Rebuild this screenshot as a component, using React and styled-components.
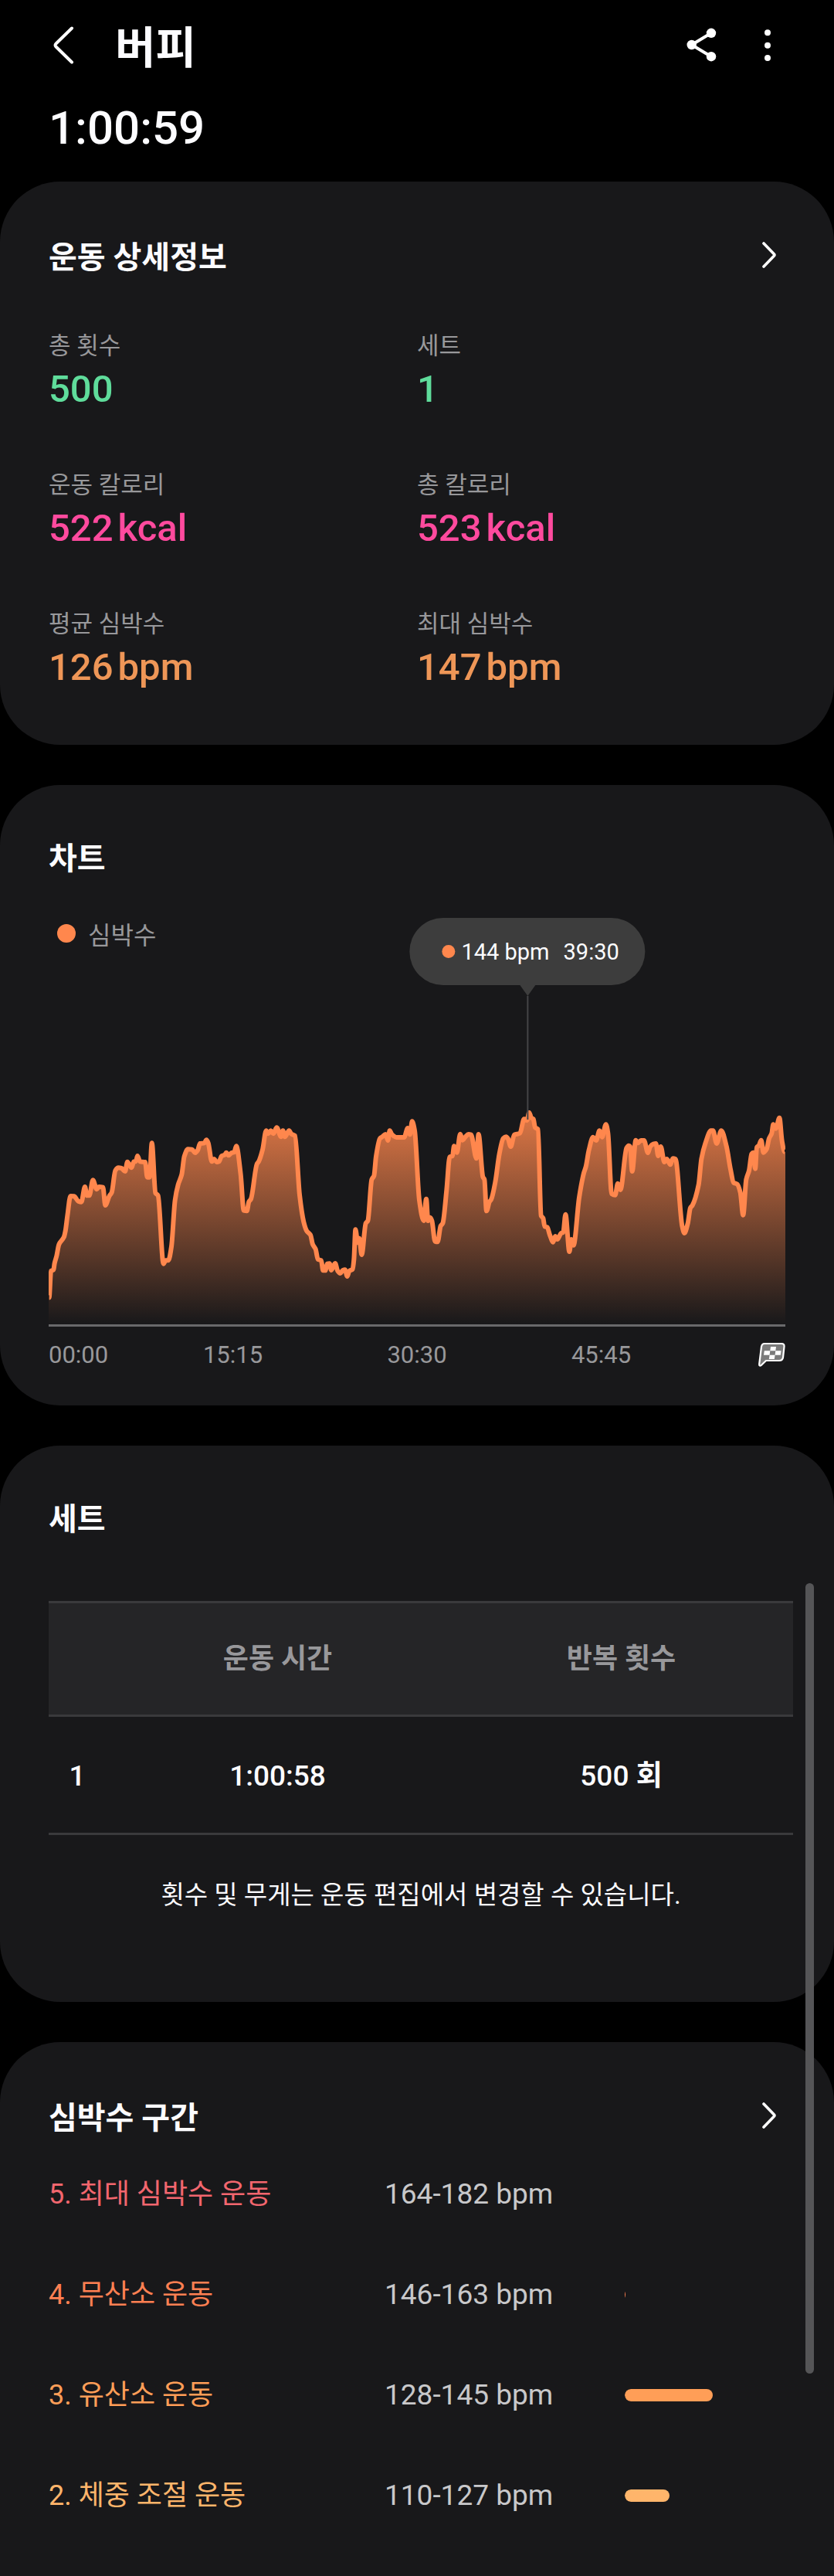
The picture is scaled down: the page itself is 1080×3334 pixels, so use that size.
import styled, { createGlobalStyle } from "styled-components";

const GlobalStyle = createGlobalStyle`
  * {
    box-sizing: border-box;
  }

  body {
    margin: 0;
    background-color: #000000;
    color: #fcfcff;
    font-family: Roboto, "Noto Sans CJK KR", sans-serif;
  }
`;

const Container = styled.div`
  position: relative;
  min-height: 100vh;
  display: flex;
  flex-direction: column;
`;

const Header = styled.header`
  padding: 26px 66px 32px 63px;
`;

const TopBar = styled.div`
  display: flex;
  align-items: center;
  height: 66px;
`;

const IconButton = styled.button`
  display: flex;
  align-items: center;
  justify-content: center;
  width: ${(props) => props.$width || 40}px;
  height: 66px;
  padding: 0;
  border: none;
  background: none;
  color: white;
  cursor: pointer;
`;

const Title = styled.h1`
  flex: 1;
  margin: 0 0 0 48px;
  padding-top: 8px;
  font-size: 57px;
  line-height: 66px;
  font-weight: 700;
`;

const Actions = styled.div`
  display: flex;
  gap: 46px;
`;

const Duration = styled.div`
  margin-top: 36px;
  font-size: 60px;
  line-height: 75px;
  font-weight: 500;
`;

const Sections = styled.main`
  flex: 1;
  display: flex;
  flex-direction: column;
  gap: 52px;
`;

const Card = styled.section`
  padding: 66px 63px ${(props) => props.$bottom || 0}px;
  border-radius: 78px;
  background-color: #18181a;
`;

const LastCard = styled(Card)`
  flex: 1;
  border-radius: 78px 78px 0 0;
`;

const CardHead = styled.div`
  display: flex;
  align-items: flex-end;
  justify-content: space-between;
  height: ${(props) => (props.$linked ? 63 : 60)}px;
`;

const CardTitle = styled.h2`
  margin: 0;
  font-size: 40px;
  line-height: 60px;
  font-weight: 700;
`;

const Stats = styled.dl`
  display: grid;
  grid-template-columns: 1fr 1fr;
  row-gap: 66px;
  margin: 60px 0 0;
`;

const Stat = styled.div`
  height: 114px;
`;

const StatLabel = styled.dt`
  color: #98989b;
  font-size: 31px;
  line-height: 48px;
`;

const StatValue = styled.dd`
  display: flex;
  gap: 6px;
  margin: 0;
  color: ${(props) => props.$color};
  font-size: 49px;
  line-height: 64px;
  font-weight: 500;
`;

const Chart = styled.div`
  position: relative;
  margin-top: 46px;
`;

const Legend = styled.div`
  display: flex;
  align-items: center;
  gap: 16px;
  height: 40px;
  padding-left: 11px;
  color: #98989b;
  font-size: 32px;
`;

const Dot = styled.span`
  width: ${(props) => props.$size}px;
  height: ${(props) => props.$size}px;
  border-radius: 50%;
  background-color: #ff874d;
`;

const Plot = styled.svg`
  display: block;
  width: 100%;
  height: 314px;
  margin-top: 172px;
`;

const Axis = styled.div`
  display: grid;
  grid-template-columns: 1fr 2fr 2fr 2fr 1fr;
  align-items: center;
  height: 75px;
  border-top: 3px solid #69696b;
  color: #98989b;
  font-size: 31px;
  text-align: center;

  & > :first-child {
    text-align: left;
  }

  & > :last-child {
    justify-self: end;
  }
`;

const Marker = styled.div`
  position: absolute;
  top: 0;
  left: ${(props) => props.$at}%;
  display: flex;
  flex-direction: column;
  align-items: center;
  transform: translateX(-50%);
`;

const Tooltip = styled.div`
  display: flex;
  align-items: center;
  gap: 8px;
  height: 87px;
  padding: 0 34px 0 42px;
  border-radius: 44px;
  background-color: #3d3d3d;
  font-size: 29px;
  white-space: nowrap;
`;

const TooltipTime = styled.span`
  margin-left: 10px;
`;

const Arrow = styled.div`
  border: 10px solid transparent;
  border-top: 14px solid #3d3d3d;
  border-bottom: none;
`;

const MarkerLine = styled.div`
  width: 2px;
  height: 160px;
  background-color: #444446;
`;

const Table = styled.table`
  width: 100%;
  margin-top: 75px;
  border-collapse: collapse;
  table-layout: fixed;
`;

const TableWrap = styled.div`
  margin-right: -10px;
`;

const HeadCell = styled.th`
  width: ${(props) => props.$width || "auto"};
  height: 147px;
  padding: 0;
  border: solid #3a3a3c;
  border-width: 3px 0;
  background-color: #252527;
  color: #98989b;
  font-size: 36px;
  line-height: 48px;
  font-weight: 700;
`;

const Cell = styled.td`
  height: 153px;
  padding: 4px 0 0;
  border-bottom: 3px solid #3a3a3c;
  font-size: 37px;
  line-height: 48px;
  font-weight: 500;
  text-align: center;
`;

const Unit = styled.span`
  font-weight: 700;
`;

const Note = styled.p`
  margin: 54px 0 0;
  font-size: 33px;
  line-height: 48px;
  text-align: center;
`;

const Zones = styled.ul`
  margin: 3px 0 0;
  padding: 0;
  list-style: none;
`;

const Zone = styled.li`
  display: grid;
  grid-template-columns: 435px 311px 1fr;
  align-items: center;
  height: 130px;
  font-size: 36px;
  line-height: 130px;
`;

const ZoneName = styled.span`
  color: ${(props) => props.$color};
`;

const ZoneRange = styled.span`
  color: #c8c8ca;
  font-size: 37px;
`;

const ZoneTrack = styled.span`
  height: 16px;
  border-radius: 8px;
  overflow: hidden;
`;

const ZoneBar = styled.span`
  display: block;
  height: 16px;
  border-radius: 8px;
  background-color: ${(props) => props.$color};
`;

const Scrollbar = styled.div`
  position: absolute;
  top: 2049px;
  right: 26px;
  width: 11px;
  height: 1023px;
  border-radius: 6px;
  background-color: #555557;
`;

const green = "#5fdc9b";
const pink = "#ff4a9e";
const orange = "#ee9657";

const stats = [
  { label: "총 횟수", value: "500", color: green },
  { label: "세트", value: "1", color: green },
  { label: "운동 칼로리", value: "522", unit: "kcal", color: pink },
  { label: "총 칼로리", value: "523", unit: "kcal", color: pink },
  { label: "평균 심박수", value: "126", unit: "bpm", color: orange },
  { label: "최대 심박수", value: "147", unit: "bpm", color: orange },
];

const zones = [
  { name: "5. 최대 심박수 운동", range: "164-182 bpm", color: "#f2666e", share: 0 },
  { name: "4. 무산소 운동", range: "146-163 bpm", color: "#ff8052", share: 0.5 },
  { name: "3. 유산소 운동", range: "128-145 bpm", color: "#ff9e57", share: 55 },
  { name: "2. 체중 조절 운동", range: "110-127 bpm", color: "#ffb56b", share: 28 },
];

// heart rate samples, [x, y] in plot units
const samples = [
  [2, 838], [9, 735], [19, 730], [23, 705], [31, 676], [40, 632], [59, 604], [65, 580],
  [73, 520], [85, 444], [99, 445], [115, 464], [127, 467], [141, 408], [149, 442], [158, 442],
  [172, 382], [187, 418], [195, 408], [211, 410], [220, 480], [236, 443], [245, 430], [259, 345],
  [271, 334], [283, 336], [297, 348], [306, 311], [322, 334], [331, 310], [339, 309], [345, 288],
  [355, 310], [375, 312], [383, 371], [392, 371], [401, 238], [415, 432], [425, 442], [446, 707],
  [455, 694], [465, 694], [477, 640], [491, 460], [503, 400], [517, 360], [527, 290], [541, 262],
  [557, 263], [569, 276], [579, 266], [588, 240], [605, 238], [613, 226], [620, 238], [634, 310],
  [643, 300], [653, 312], [662, 310], [672, 288], [684, 284], [690, 275], [699, 286], [711, 276],
  [721, 273], [729, 250], [746, 360], [758, 500], [770, 502], [778, 466], [786, 455], [809, 320],
  [816, 310], [831, 264], [845, 190], [853, 202], [863, 190], [873, 202], [886, 178], [903, 214],
  [910, 190], [918, 214], [934, 190], [943, 203], [957, 210], [975, 440], [991, 545], [1003, 580],
  [1017, 595], [1026, 632], [1037, 650], [1046, 690], [1059, 694], [1066, 733], [1075, 733], [1082, 707],
  [1091, 706], [1098, 732], [1113, 705], [1123, 735], [1133, 744], [1143, 732], [1151, 730], [1160, 756],
  [1168, 735], [1181, 728], [1186, 690], [1192, 574], [1201, 625], [1207, 608], [1216, 672], [1232, 550],
  [1240, 540], [1255, 380], [1264, 365], [1272, 290], [1287, 220], [1296, 214], [1309, 204], [1318, 228],
  [1325, 190], [1333, 204], [1351, 216], [1381, 216], [1395, 180], [1404, 205], [1412, 154], [1422, 190],
  [1440, 460], [1457, 540], [1467, 455], [1474, 540], [1482, 527], [1489, 540], [1501, 620], [1511, 622],
  [1523, 560], [1531, 550], [1546, 420], [1558, 292], [1569, 288], [1575, 250], [1586, 275], [1599, 203],
  [1608, 227], [1619, 214], [1631, 204], [1641, 206], [1662, 298], [1670, 204], [1687, 370], [1693, 380],
  [1701, 502], [1713, 465], [1719, 458], [1735, 390], [1751, 280], [1766, 220], [1777, 214], [1785, 222],
  [1795, 252], [1809, 206], [1831, 200], [1847, 145], [1858, 150], [1867, 120], [1875, 140], [1883, 145],
  [1890, 178], [1901, 185], [1913, 520], [1921, 530], [1927, 562], [1937, 565], [1947, 595], [1960, 623],
  [1968, 600], [1976, 612], [1991, 588], [1999, 585], [2008, 515], [2023, 660], [2031, 612], [2039, 635],
  [2061, 450], [2079, 355], [2087, 330], [2099, 265], [2115, 215], [2127, 228], [2140, 190], [2150, 215],
  [2165, 166], [2173, 200], [2187, 435], [2201, 440], [2211, 395], [2221, 420], [2245, 258], [2254, 248],
  [2259, 252], [2267, 348], [2281, 227], [2289, 238], [2301, 228], [2313, 228], [2328, 276], [2337, 252],
  [2349, 242], [2359, 240], [2368, 288], [2378, 252], [2392, 312], [2401, 300], [2415, 322], [2425, 298],
  [2435, 300], [2461, 560], [2470, 588], [2483, 550], [2493, 490], [2501, 480], [2525, 400], [2536, 300],
  [2551, 240], [2573, 190], [2581, 190], [2595, 240], [2613, 190], [2633, 250], [2649, 340], [2661, 392],
  [2675, 398], [2687, 430], [2698, 518], [2710, 380], [2721, 345], [2731, 280], [2737, 275], [2745, 338],
  [2751, 255], [2759, 248], [2768, 227], [2777, 275], [2789, 262], [2799, 220], [2809, 200], [2815, 166],
  [2825, 182], [2839, 140], [2849, 230], [2859, 272],
];

// smooth line that keeps every peak where it was sampled
const smoothPath = (points) => {
  const slope = (i) => {
    if (i === 0 || i === points.length - 1) return 0;
    const [x0, y0] = points[i - 1];
    const [x1, y1] = points[i];
    const [x2, y2] = points[i + 1];
    const a = (y1 - y0) / (x1 - x0);
    const b = (y2 - y1) / (x2 - x1);
    return a * b <= 0 ? 0 : (2 * a * b) / (a + b);
  };

  return points.slice(1).reduce((path, [x, y], i) => {
    const [px, py] = points[i];
    const third = (x - px) / 3;
    const c1 = `${px + third} ${py + slope(i) * third}`;
    const c2 = `${x - third} ${y - slope(i + 1) * third}`;
    return `${path} C${c1} ${c2} ${x} ${y}`;
  }, `M${points[0].join(" ")}`);
};

const linePath = smoothPath(samples);

const BackIcon = () => (
  <svg width="28" height="50" viewBox="0 0 28 50" fill="none" stroke="currentColor" strokeWidth="4" strokeLinecap="round" strokeLinejoin="round">
    <path d="M25 2.500L4.500 22.500Q2.500 24.500 4.500 26.500L25 46.500" />
  </svg>
);

const ShareIcon = () => (
  <svg width="40" height="46" viewBox="0 0 40 46" fill="currentColor">
    <path d="M33 6.800L7.700 22L33 37.200" fill="none" stroke="currentColor" strokeWidth="4" />
    <circle cx="33" cy="6.800" r="6.200" />
    <circle cx="7.700" cy="22" r="6.200" />
    <circle cx="33" cy="37.200" r="6.200" />
  </svg>
);

const MoreIcon = () => (
  <svg width="10" height="44" viewBox="0 0 10 44" fill="currentColor">
    <circle cx="5" cy="5.300" r="4" />
    <circle cx="5" cy="21.700" r="4" />
    <circle cx="5" cy="38" r="4" />
  </svg>
);

const ChevronIcon = () => (
  <svg width="20" height="36" viewBox="0 0 20 36" fill="none" stroke="currentColor" strokeWidth="3.600" strokeLinecap="round" strokeLinejoin="round">
    <path d="M3 2L16.500 16Q17.500 17 16.500 18L3 32" />
  </svg>
);

const FlagIcon = () => (
  <svg width="36" height="32" viewBox="0 0 36 32">
    <path
      d="M9 2H31Q35 2 34.500 6L33 20Q32.300 24 28 24H11L4.500 30.300Q2 31.500 2.200 28.500L5 6Q5.700 2 9 2Z"
      fill="#7b7b7b"
      stroke="white"
      strokeWidth="2.200"
      strokeLinejoin="round"
    />
    <path d="M17 6H24L23.300 11.300H16.300ZM8.800 11.300H16.300L15.600 16.700H8ZM23.300 11.300H30.500L29.800 16.700H22.600ZM15.600 16.700H22.600L21.800 22H14.800Z" fill="white" />
  </svg>
);

const HeartRateChart = () => (
  <Chart>
    <Legend>
      <Dot $size={24} />
      심박수
    </Legend>
    <Plot viewBox="0 0 2862 942" preserveAspectRatio="none">
      <defs>
        <linearGradient id="heart" gradientUnits="userSpaceOnUse" x1="0" y1="110" x2="0" y2="942">
          <stop offset="0" stopColor="#ff874d" stopOpacity="0.87" />
          <stop offset="1" stopColor="#ff874d" stopOpacity="0" />
        </linearGradient>
      </defs>
      <path d={`${linePath} L2862 272 V942 H0 V838 Z`} fill="url(#heart)" />
      <path d={linePath} fill="none" stroke="#ff874d" strokeWidth="6" strokeLinejoin="round" vectorEffect="non-scaling-stroke" />
    </Plot>
    <Axis>
      <span>00:00</span>
      <span>15:15</span>
      <span>30:30</span>
      <span>45:45</span>
      <FlagIcon />
    </Axis>
    <Marker $at={65}>
      <Tooltip>
        <Dot $size={17} />
        <span>144 bpm</span>
        <TooltipTime>39:30</TooltipTime>
      </Tooltip>
      <Arrow />
      <MarkerLine />
    </Marker>
  </Chart>
);

const App = () => {
  return (
    <Container>
      <GlobalStyle />
      <Header>
        <TopBar>
          <IconButton $width={38} aria-label="뒤로">
            <BackIcon />
          </IconButton>
          <Title>버피</Title>
          <Actions>
            <IconButton aria-label="공유">
              <ShareIcon />
            </IconButton>
            <IconButton aria-label="더보기">
              <MoreIcon />
            </IconButton>
          </Actions>
        </TopBar>
        <Duration>1:00:59</Duration>
      </Header>
      <Sections>
        <Card $bottom={66}>
          <CardHead $linked>
            <CardTitle>운동 상세정보</CardTitle>
            <IconButton $width={42} aria-label="운동 상세정보">
              <ChevronIcon />
            </IconButton>
          </CardHead>
          <Stats>
            {stats.map((stat) => (
              <Stat key={stat.label}>
                <StatLabel>{stat.label}</StatLabel>
                <StatValue $color={stat.color}>
                  <span>{stat.value}</span>
                  {stat.unit && <span>{stat.unit}</span>}
                </StatValue>
              </Stat>
            ))}
          </Stats>
        </Card>
        <Card $bottom={30}>
          <CardHead>
            <CardTitle>차트</CardTitle>
          </CardHead>
          <HeartRateChart />
        </Card>
        <Card $bottom={114}>
          <CardHead>
            <CardTitle>세트</CardTitle>
          </CardHead>
          <TableWrap>
            <Table>
              <thead>
                <tr>
                  <HeadCell $width="74px" />
                  <HeadCell>운동 시간</HeadCell>
                  <HeadCell>반복 횟수</HeadCell>
                </tr>
              </thead>
              <tbody>
                <tr>
                  <Cell>1</Cell>
                  <Cell>1:00:58</Cell>
                  <Cell>
                    500 <Unit>회</Unit>
                  </Cell>
                </tr>
              </tbody>
            </Table>
            <Note>횟수 및 무게는 운동 편집에서 변경할 수 있습니다.</Note>
          </TableWrap>
        </Card>
        <LastCard>
          <CardHead $linked>
            <CardTitle>심박수 구간</CardTitle>
            <IconButton $width={42} aria-label="심박수 구간">
              <ChevronIcon />
            </IconButton>
          </CardHead>
          <Zones>
            {zones.map((zone) => (
              <Zone key={zone.name}>
                <ZoneName $color={zone.color}>{zone.name}</ZoneName>
                <ZoneRange>{zone.range}</ZoneRange>
                <ZoneTrack>
                  <ZoneBar $color={zone.color} style={{ width: `${zone.share}%` }} />
                </ZoneTrack>
              </Zone>
            ))}
          </Zones>
        </LastCard>
      </Sections>
      <Scrollbar />
    </Container>
  );
};

export default App;
